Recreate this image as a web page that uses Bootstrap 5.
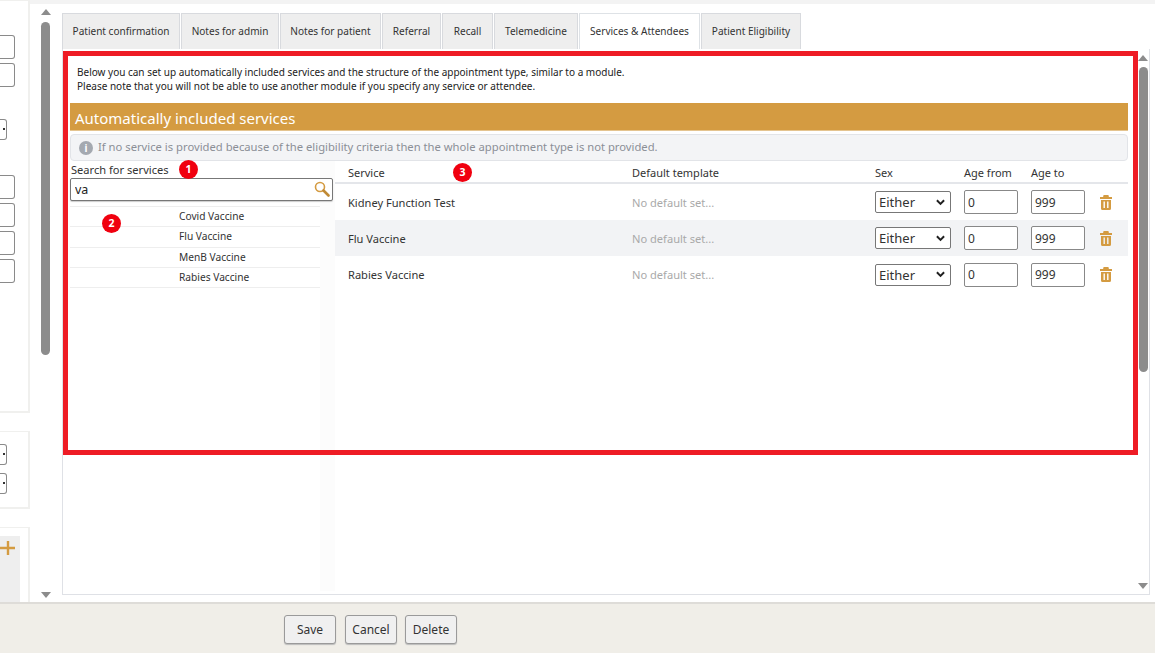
<!DOCTYPE html>
<html lang="en"><head><meta charset="utf-8"><title>Services & Attendees</title>
<link href="https://cdn.jsdelivr.net/npm/bootstrap@5.3.0/dist/css/bootstrap.min.css" rel="stylesheet">
<style>
html,body{height:100%;overflow:hidden}
body{font-family:"Noto Sans","Open Sans",sans-serif;font-size:11px;color:#333;background:#fff}
.shell{height:653px}
.topstrip{height:4px;background:#f3f3f3;flex:none}
.midzone{flex:1;min-height:0}
.sidecol{width:30px;flex:none}
.sidebox{width:30px;background:#fff;border:1px solid #f0f0ee;border-left:0;border-right-width:2px;border-bottom-width:2px}
.box-a{height:413px;margin-top:-4px;padding-top:34px}
.box-b{height:78px;margin-top:18px;padding-top:12px}
.box-c{flex:1;margin-top:18px;padding-top:8px;border-bottom:0}
.stub{display:block;width:15px;height:24px;border:1px solid #8a8a8a;border-left:0;border-radius:0 3px 3px 0;margin-bottom:4px}
.stubsel{display:block;width:7px;height:21px;border:1px solid #8a8a8a;border-left:0;border-radius:0 3px 3px 0;position:relative}
.stubsel::after{content:"";position:absolute;right:1px;top:8px;width:2px;height:2px;background:#333}
.sel-gap{margin-top:32px}
.stub-gap{margin-top:35px}
.graybox{width:20px;height:100%;background:#eee;padding-top:5px;line-height:1}
.side-scroll{margin-left:11px;width:10px;padding-top:5px;padding-bottom:4px}
.arrow-up,.arrow-down{width:0;height:0;border-left:5px solid transparent;border-right:5px solid transparent;flex:none}
.arrow-up{border-bottom:6px solid #8c8c8c}
.arrow-down{border-top:6px solid #8c8c8c}
.thumb{background:#8c8c8c;border-radius:5px;width:9px;flex:none}
.side-scroll .thumb{height:333px;margin-top:7px}
.maincol{margin-left:11px;width:1089px;flex:none;padding-top:9px}
.tabrow{height:36px;flex:none;border:0;gap:1px;padding-left:0}
.tabrow .nav-link{height:36px;margin:0;padding:0;display:flex;align-items:center;justify-content:center;font-size:10.05px;color:#333;background:#eee;border:1px solid #d8dade;border-bottom:0;border-radius:0}
.tabrow .nav-link.active{background:#fff;color:#333}
.panelbox{position:relative;width:1088px;height:546px;border:1px solid #dfe1e6;border-top:0;background:#fff;flex:none}
.panel-inner{width:1074px;padding:16px 0 0 7px;flex:none}
.intro{margin:0 0 0 7px;font-size:10px;line-height:14px;color:#222;height:30px}
.bandhead{height:28px;margin-top:8px;width:1058px;background:#d49b41;color:#fff;font-size:15px;line-height:30px;padding-left:5px;border-bottom:1px solid #e4c490}
.infobar{height:27px;margin-top:3px;width:1058px;background:#f3f4f6;border:1px solid #e2e4e8;border-radius:4px;color:#8b8f96;font-size:11.24px;padding-left:8px;gap:5px}
.infodot{width:14px;height:14px;border-radius:50%;background:#a4a9b0;color:#fff;font-size:10px;font-weight:700;line-height:14px;text-align:center;flex:none}
.cols{width:1058px;height:430px}
.leftpane{width:265px;flex:none}
.srchlabel{font-size:11.1px;line-height:14px;margin-top:2px;padding-left:1px;color:#333}
.srchwrap{position:relative;width:263px;height:23px;margin-top:1px}
.srchinput.form-control{height:23px;padding:0 24px 0 4px;border:1px solid #777;border-radius:2px;font-size:12.5px;line-height:20px;color:#222;font-family:inherit;box-shadow:0 1px 1px #ccc}
.srchicon{position:absolute;right:3px;top:3px}
.svclist{margin-top:5px;width:263px}
.svcrows{width:250px;border-top:1px solid #eee}
.svcrow{height:20.3px;line-height:19px;padding-left:109px;border-bottom:1px solid #eee;font-size:10.2px;color:#333}
.list-scroll{padding:5px 0 0 2px;width:13px}
.list-scroll .arrow-up{border-bottom-width:7px}
.rightpane{width:793px;flex:none;background:#fff;box-shadow:-15px 0 0 #fcfcfc}
.svctable{width:793px;table-layout:fixed;margin:0;font-size:11.1px;color:#333;--bs-table-bg:transparent}
.svctable th{font-weight:400;height:22px;padding:2px 0 0 0;vertical-align:middle;border-bottom:2px solid #e4e6ea;font-size:11px;line-height:14px}
.svctable td{height:37px;padding:0;vertical-align:middle;border:0}
.svctable tr.alt td{background:#f2f3f5;height:36px}
.svctable th:first-child{padding-left:13px}
.svctable td:first-child{padding:2px 0 0 13px}
.svctable td.muted{padding-top:2px}
.muted{color:#a9a9a9}
.sexsel.form-select{width:76px;height:22px;padding:0 0 0 3px;border:1px solid #777;border-radius:2px;font-size:13px;line-height:20px;color:#333;background-image:url("data:image/svg+xml,%3csvg xmlns='http://www.w3.org/2000/svg' viewBox='0 0 10 7'%3e%3cpath fill='none' stroke='%23222' stroke-width='2.2' d='M1 1l4 4 4-4'/%3e%3c/svg%3e");background-size:9px 7px;background-position:right 5px center;font-family:inherit}
.agein.form-control{width:54px;height:24px;padding:0 3px;border:1px solid #888;border-radius:2px;font-size:12px;color:#333;font-family:inherit}
.trash{display:block;margin-left:-1px}
.panel-scroll{width:13px;padding:6px 0 5px 0;align-items:center}
.panel-scroll .thumb{height:305px;margin-top:6px}
.redframe{position:absolute;left:0;top:2px;width:1075px;height:404px;border:5.500px solid #ee1c25;pointer-events:none}
.pin{position:absolute;width:19px;height:19px;border-radius:50%;background:#f0000f;color:#fff;font-size:10.5px;font-weight:700;line-height:19px;text-align:center}
.pin-one{left:116px;top:111px}
.pin-two{left:39px;top:165px}
.pin-three{left:390px;top:114px}
.footerbar{height:51px;flex:none;background:#f0eee8;border-top:2px solid #dedcd8;padding:11px 0 0 284px;gap:9px}
.footbtn.btn{width:52px;height:29px;padding:0;background:#f0f0f0;border:1px solid #9a9a9a;border-radius:3px;font-size:12px;color:#333;box-shadow:0 1px 1px #bbb}
.footbtn.pull-left{margin-left:-1px}
</style></head>
<body>
<div class="shell d-flex flex-column">
  <div class="topstrip"></div>
  <div class="midzone d-flex">
    <div class="sidecol d-flex flex-column">
      <div class="sidebox box-a">
        <span class="stub"></span><span class="stub"></span>
        <span class="stubsel sel-gap"></span>
        <span class="stub stub-gap"></span><span class="stub"></span><span class="stub"></span><span class="stub"></span>
      </div>
      <div class="sidebox box-b">
        <span class="stubsel mb-2"></span><span class="stubsel"></span>
      </div>
      <div class="sidebox box-c">
        <div class="graybox">
          <svg class="d-block" width="16" height="14" viewBox="0 0 16 14"><path d="M8 0v14M0 7h15" stroke="#d49b41" stroke-width="2.400"/></svg>
        </div>
      </div>
    </div>
    <div class="side-scroll d-flex flex-column">
      <div class="arrow-up"></div><div class="thumb"></div><div class="flex-grow-1"></div><div class="arrow-down"></div>
    </div>
    <div class="maincol d-flex flex-column">
      <ul class="nav nav-tabs tabrow">
        <li class="nav-item"><a class="nav-link" style="width:118px" href="#">Patient confirmation</a></li>
        <li class="nav-item"><a class="nav-link" style="width:98px" href="#">Notes for admin</a></li>
        <li class="nav-item"><a class="nav-link" style="width:101px" href="#">Notes for patient</a></li>
        <li class="nav-item"><a class="nav-link" style="width:59px" href="#">Referral</a></li>
        <li class="nav-item"><a class="nav-link" style="width:51px" href="#">Recall</a></li>
        <li class="nav-item"><a class="nav-link" style="width:84px" href="#">Telemedicine</a></li>
        <li class="nav-item"><a class="nav-link active" style="width:121px" href="#">Services &amp; Attendees</a></li>
        <li class="nav-item"><a class="nav-link" style="width:100px" href="#">Patient Eligibility</a></li>
      </ul>
      <div class="panelbox d-flex">
        <div class="panel-inner">
          <p class="intro">Below you can set up automatically included services and the structure of the appointment type, similar to a module.<br>Please note that you will not be able to use another module if you specify any service or attendee.</p>
          <div class="bandhead">Automatically included services</div>
          <div class="infobar d-flex align-items-center"><span class="infodot">i</span><span>If no service is provided because of the eligibility criteria then the whole appointment type is not provided.</span></div>
          <div class="cols d-flex">
            <div class="leftpane">
              <div class="srchlabel">Search for services</div>
              <div class="srchwrap">
                <input class="form-control srchinput" type="text" value="va">
                <svg class="srchicon" width="16" height="16" viewBox="0 0 16 16" fill="none"><circle cx="6" cy="6" r="4.500" stroke="#d49b41" stroke-width="1.600"/><path d="M9.500 9.500l5 5" stroke="#c08a35" stroke-width="2.600" stroke-linecap="round"/></svg>
              </div>
              <div class="svclist d-flex">
                <div class="svcrows">
                  <div class="svcrow">Covid Vaccine</div>
                  <div class="svcrow">Flu Vaccine</div>
                  <div class="svcrow">MenB Vaccine</div>
                  <div class="svcrow">Rabies Vaccine</div>
                </div>
                <div class="list-scroll"><div class="arrow-up"></div></div>
              </div>
            </div>
            <div class="rightpane">
              <table class="table svctable">
                <colgroup><col style="width:297px"><col style="width:243px"><col style="width:89px"><col style="width:67px"><col style="width:70px"><col></colgroup>
                <thead><tr><th>Service</th><th>Default template</th><th>Sex</th><th>Age from</th><th>Age to</th><th></th></tr></thead>
                <tbody>
                  <tr><td>Kidney Function Test</td><td class="muted">No default set...</td><td><select class="form-select sexsel"><option>Either</option></select></td><td><input class="form-control agein" value="0"></td><td><input class="form-control agein" value="999"></td><td><svg class="trash" width="12" height="15" viewBox="0 0 12 15"><path fill="#d49b41" fill-rule="evenodd" d="M4.200 0h3.600a1 1 0 0 1 1 1v1H12v2H0V2h3.200V1a1 1 0 0 1 1-1zM1 5h10v8.500a1.500 1.500 0 0 1-1.500 1.500h-7A1.500 1.500 0 0 1 1 13.500zM3.500 6.500v6.500h1.400V6.500zM7.100 6.500v6.500h1.400V6.500z"/></svg></td></tr>
                  <tr class="alt"><td>Flu Vaccine</td><td class="muted">No default set...</td><td><select class="form-select sexsel"><option>Either</option></select></td><td><input class="form-control agein" value="0"></td><td><input class="form-control agein" value="999"></td><td><svg class="trash" width="12" height="15" viewBox="0 0 12 15"><path fill="#d49b41" fill-rule="evenodd" d="M4.200 0h3.600a1 1 0 0 1 1 1v1H12v2H0V2h3.200V1a1 1 0 0 1 1-1zM1 5h10v8.500a1.500 1.500 0 0 1-1.500 1.500h-7A1.500 1.500 0 0 1 1 13.500zM3.500 6.500v6.500h1.400V6.500zM7.100 6.500v6.500h1.400V6.500z"/></svg></td></tr>
                  <tr><td>Rabies Vaccine</td><td class="muted">No default set...</td><td><select class="form-select sexsel"><option>Either</option></select></td><td><input class="form-control agein" value="0"></td><td><input class="form-control agein" value="999"></td><td><svg class="trash" width="12" height="15" viewBox="0 0 12 15"><path fill="#d49b41" fill-rule="evenodd" d="M4.200 0h3.600a1 1 0 0 1 1 1v1H12v2H0V2h3.200V1a1 1 0 0 1 1-1zM1 5h10v8.500a1.500 1.500 0 0 1-1.500 1.500h-7A1.500 1.500 0 0 1 1 13.500zM3.500 6.500v6.500h1.400V6.500zM7.100 6.500v6.500h1.400V6.500z"/></svg></td></tr>
                </tbody>
              </table>
            </div>
          </div>
        </div>
        <div class="panel-scroll d-flex flex-column">
          <div class="arrow-up"></div><div class="thumb"></div><div class="flex-grow-1"></div><div class="arrow-down"></div>
        </div>
        <div class="redframe"></div>
        <span class="pin pin-one">1</span>
        <span class="pin pin-two">2</span>
        <span class="pin pin-three">3</span>
      </div>
    </div>
  </div>
  <div class="footerbar d-flex">
    <button class="btn footbtn" type="button">Save</button>
    <button class="btn footbtn" type="button">Cancel</button>
    <button class="btn footbtn pull-left" type="button">Delete</button>
  </div>
</div>
</body></html>
